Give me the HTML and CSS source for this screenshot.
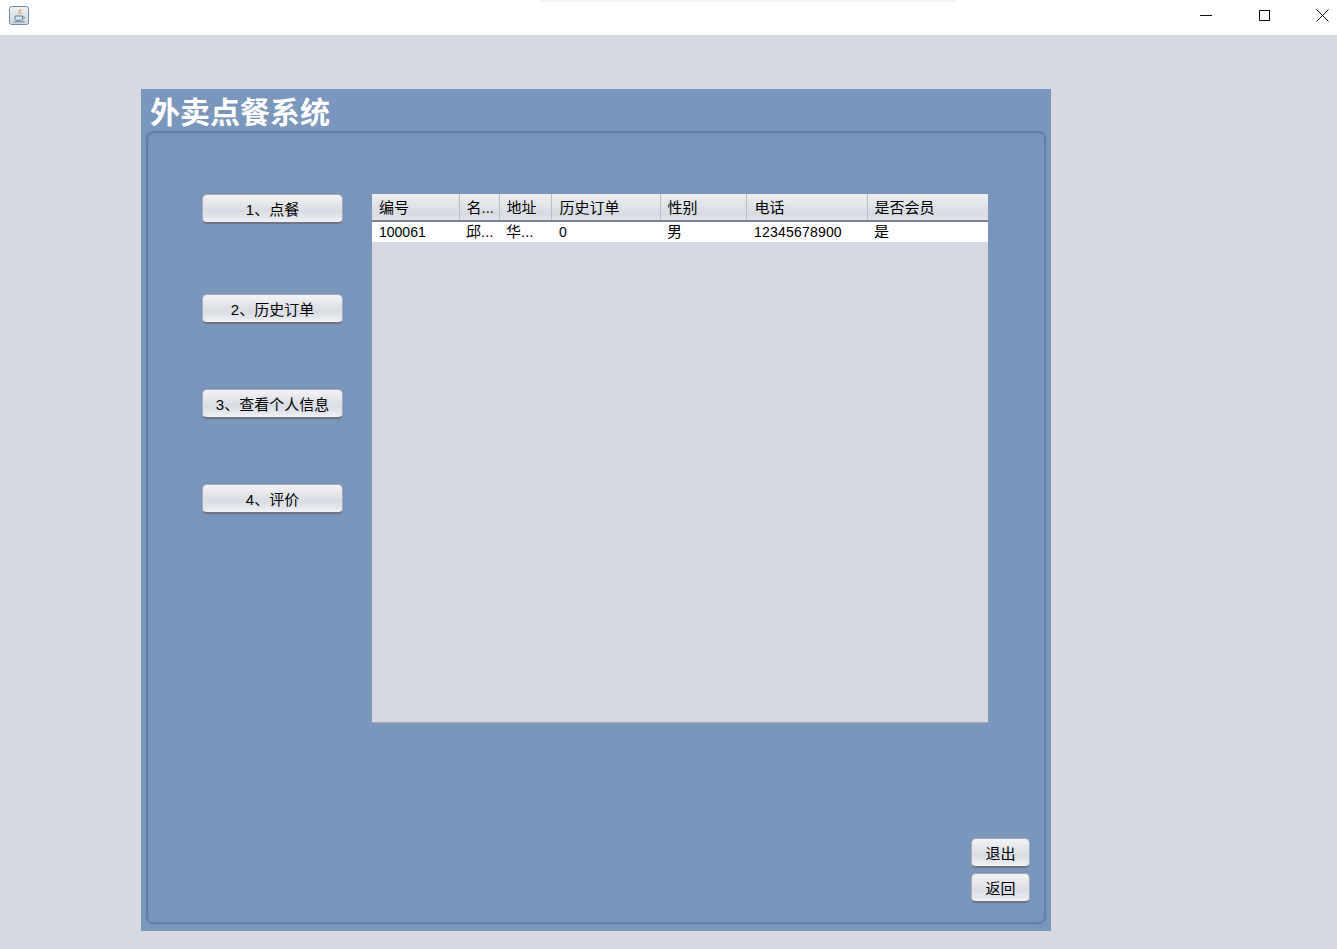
FILE: index.html
```html
<!DOCTYPE html>
<html lang="zh-CN">
<head>
<meta charset="utf-8">
<title>外卖点餐系统</title>
<link rel="stylesheet" href="styles.css">
</head>
<body>
<header class="titlebar">
  <div class="app-icon">
    <svg width="20" height="19" viewBox="0 0 20 19" aria-hidden="true">
      <defs><linearGradient id="ig" x1="0" y1="0" x2="0" y2="1"><stop offset="0" stop-color="#f1f4f6"/><stop offset="1" stop-color="#c9d5de"/></linearGradient></defs>
      <rect x="0.500" y="0.500" width="19" height="18" rx="2" fill="url(#ig)" stroke="#6f8ba5"/>
      <path d="M10.500 2.500c1.600 1.600-2 2.800-.8 4.800.4.600 1 1 .8 1.700 1.400-1-1-2.200.4-3.400.9-.8 2-1.200 1.500-2.600-.1 1-1 1.100-1.900-.5z" fill="#e5853a"/>
      <path d="M12.800 5c.4 1-1 1.800-.5 3.600.7-.8 1.500-1.700.5-3.600z" fill="#eda25f"/>
      <path d="M6 10h7.500v2.600c0 1.200-1 1.700-2 1.700H8c-1 0-2-.5-2-1.700z" fill="#dbe3e9" stroke="#5f7f99" stroke-width="1"/>
      <path d="M13.500 10.700h1.300c1.100 0 1.100 2-.2 2h-1.200" fill="none" stroke="#5f7f99" stroke-width=".8"/>
      <path d="M4.500 15.800h11" stroke="#5f7f99" stroke-width="1"/>
    </svg>
  </div>
  <div class="top-shadow"></div>
  <div class="win-controls">
    <svg class="win-btn" width="13" height="13" viewBox="0 0 13 13" aria-hidden="true"><path d="M0 6.500h12" stroke="#111" fill="none"/></svg>
    <svg class="win-btn" width="13" height="13" viewBox="0 0 13 13" aria-hidden="true"><rect x="1.500" y="1.500" width="10" height="10" stroke="#111" fill="none"/></svg>
    <svg class="win-btn" width="13" height="13" viewBox="0 0 13 13" aria-hidden="true"><path d="M.5.500l12 12M12.500.500l-12 12" stroke="#111" fill="none"/></svg>
  </div>
</header>

<main class="frame">
  <h1 class="frame-title">外卖点餐系统</h1>
  <section class="panel">
    <div class="panel-main">
      <nav class="menu">
        <button class="btn menu-btn first">1、点餐</button>
        <button class="btn menu-btn">2、历史订单</button>
        <button class="btn menu-btn">3、查看个人信息</button>
        <button class="btn menu-btn">4、评价</button>
      </nav>
      <div class="table-wrap">
        <table class="data">
          <colgroup>
            <col class="c1"><col class="c2"><col class="c3"><col class="c4"><col class="c5"><col class="c6"><col class="c7">
          </colgroup>
          <thead>
            <tr><th>编号</th><th>名...</th><th>地址</th><th>历史订单</th><th>性别</th><th>电话</th><th>是否会员</th></tr>
          </thead>
          <tbody>
            <tr><td>100061</td><td>邱...</td><td>华...</td><td>0</td><td>男</td><td class="phone">12345678900</td><td>是</td></tr>
          </tbody>
        </table>
      </div>
    </div>
    <div class="actions">
      <button class="btn small-btn">退出</button>
      <button class="btn small-btn">返回</button>
    </div>
  </section>
</main>
</body>
</html>
```

FILE: styles.css
```css
* { box-sizing: border-box; }
html, body { margin: 0; height: 100%; }
body {
  background: #d6d9e2;
  font-family: "Liberation Sans", "Noto Sans CJK SC", sans-serif;
  font-size: 15px;
  color: #000;
  overflow: hidden;
}
.titlebar {
  position: relative;
  height: 35px;
  background: #fff;
  display: flex;
  align-items: flex-start;
  justify-content: space-between;
}
.app-icon { margin: 6px 0 0 9px; height: 19px; }
.app-icon svg { display: block; }
.top-shadow {
  position: absolute;
  left: 540px;
  top: -3px;
  width: 415px;
  height: 3px;
  box-shadow: 0 0 3px rgba(0,0,0,.18);
}
.win-controls {
  display: flex;
  gap: 45px;
  margin: 9px 8px 0 0;
}
.win-btn { display: block; }

.frame {
  width: 910px;
  height: 842px;
  margin: 54px 0 0 141px;
  background: #7996bd;
  display: flex;
  flex-direction: column;
  padding: 0 5px 7px;
}
.frame-title {
  margin: 0;
  height: 42px;
  padding: 0 0 0 4px;
  font-size: 30px;
  line-height: 42px;
  font-weight: 700;
  color: #fff;
  font-family: "Noto Sans CJK SC", sans-serif;
}
.panel {
  flex: 1;
  border-radius: 7px;
  border: 1px solid #62799c;
  box-shadow: inset 1px 1px 2px #5f7aa0, inset -1px -1px 1px #6c87ac;
  display: flex;
  flex-direction: column;
  justify-content: space-between;
  padding: 62px 15px 20px 55px;
}
.panel-main { display: flex; gap: 29px; align-items: flex-start; padding-right: 42px; }
.menu { width: 141px; display: flex; flex-direction: column; gap: 65px; }
.menu-btn.first { margin-bottom: 5px; }

.btn {
  display: block;
  height: 30px;
  padding: 1px 0 0;
  border: 1px solid #a5acb9;
  border-bottom: 2px solid #6d7585;
  border-radius: 5px;
  background: linear-gradient(#f3f4f7 0%, #e3e5ea 35%, #d9dce3 60%, #e6e8ee 85%, #f0f2f6 100%);
  font: 15px/1 "Liberation Sans", "Noto Sans CJK SC", sans-serif;
  color: #000;
  box-shadow: 0 0 1px #5a6f90;
}
.menu-btn { width: 141px; }

.table-wrap {
  width: 616px;
  height: 529px;
  background: #d6d9e2;
  border-bottom: 1px solid #a5aab5;
}
.data {
  width: 616px;
  table-layout: fixed;
  border-collapse: collapse;
  font-size: 15px;
}
.c1 { width: 87px; } .c2 { width: 40px; } .c3 { width: 52px; }
.c4 { width: 109px; } .c5 { width: 86px; } .c6 { width: 121px; } .c7 { width: 121px; }
.data th {
  height: 27px;
  padding: 0 0 2px 7px;
  text-align: left;
  font-weight: 400;
  background: linear-gradient(#f0f1f4 0%, #e4e6ea 30%, #d8dbe2 75%, #dfe1e7 100%);
  border-right: 1px solid #b9bdc7;
  border-bottom: 2px solid #7c8494;
  white-space: nowrap;
  overflow: hidden;
}
.data th:last-child { border-right: 0; }
.data th:nth-child(4), .data td:nth-child(4),
.data th:nth-child(6), .data td:nth-child(6) { padding-left: 8px; }
.data td {
  height: 20px;
  padding: 0 0 0 7px;
  background: #fff;
  line-height: 20px;
  white-space: nowrap;
  overflow: hidden;
  font-size: 14px;
}
.data td:nth-child(2), .data td:nth-child(3), .data td:nth-child(5), .data td:nth-child(7) { font-size: 15px; }
.data td.phone { letter-spacing: .2px; }
.actions {
  display: flex;
  flex-direction: column;
  align-items: flex-end;
  gap: 5px;
}
.small-btn { width: 59px; }
```
